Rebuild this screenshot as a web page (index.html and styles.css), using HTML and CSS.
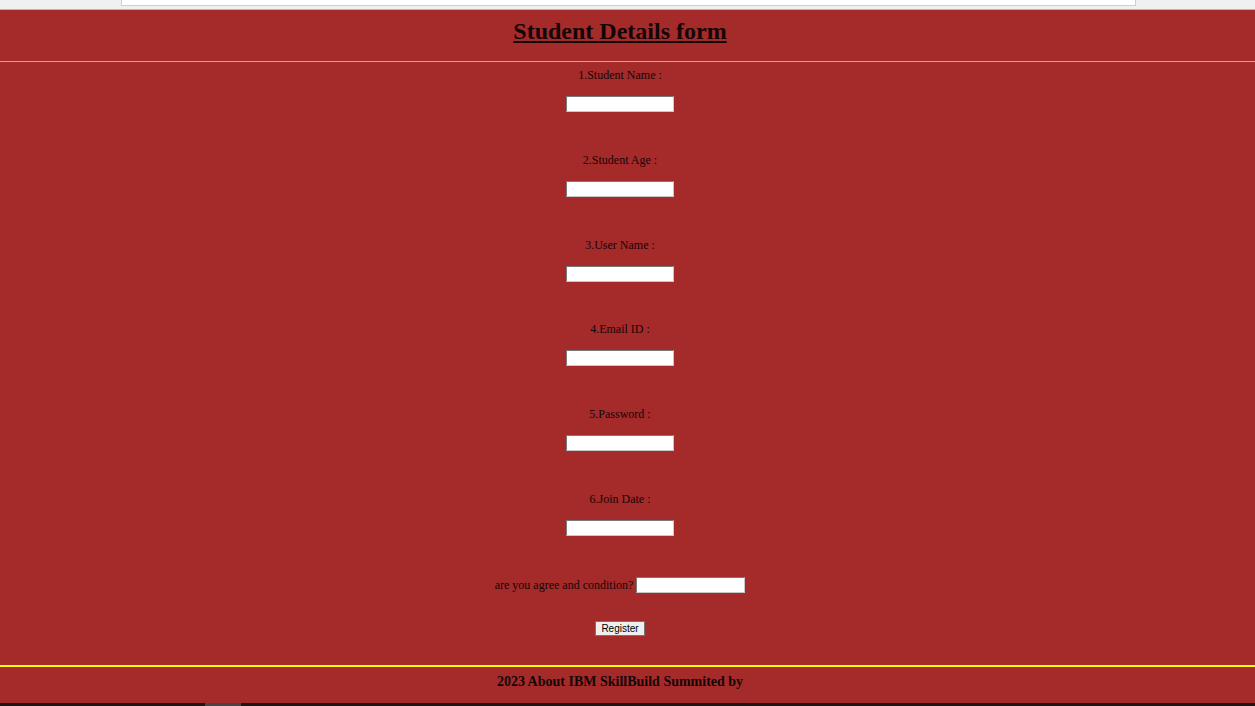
FILE: index.html
```html
<!DOCTYPE html>
<html>
<head>
<meta charset="utf-8">
<link rel="stylesheet" href="styles.css">
</head>
<body>
<div class="chrome"><div class="chrome-box"></div></div>
<div class="page">
  <header class="head"><h2 class="title">Student Details form</h2></header>
  <form class="form">
    <div class="field"><label class="lbl">1.Student Name :</label><input class="inp" type="text"></div>
    <div class="field"><label class="lbl">2.Student Age :</label><input class="inp" type="text"></div>
    <div class="field"><label class="lbl">3.User Name :</label><input class="inp" type="text"></div>
    <div class="field"><label class="lbl">4.Email ID :</label><input class="inp" type="text"></div>
    <div class="field"><label class="lbl">5.Password :</label><input class="inp" type="text"></div>
    <div class="field"><label class="lbl">6.Join Date :</label><input class="inp" type="text"></div>
    <div class="agree"><span class="lbl">are you agree and condition?</span><input class="inp" type="text"></div>
    <div class="btnrow"><button class="btn" type="button">Register</button></div>
  </form>
  <footer class="foot">2023 About IBM SkillBuild Summited by</footer>
</div>
<div class="taskbar"><div class="task-item"></div></div>
</body>
</html>
```
FILE: styles.css
```css
html, body { margin: 0; padding: 0; }
body { width: 1255px; height: 706px; overflow: hidden; background: #a52a2a; font-family: "Liberation Serif", "Times New Roman", serif; color: #140606; }
.chrome { height: 10px; background: #f0f0f0; position: relative; border-bottom: 1px solid #c9b0b0; box-sizing: border-box; }
.chrome-box { position: absolute; left: 121px; width: 1013px; top: 0; height: 5px; background: #fff; border: 1px solid #cfcfcf; border-top: none; }
.page { display: flex; flex-direction: column; height: 693px; }
.head { height: 51px; border-bottom: 1px solid #e8b400; display: flex; justify-content: center; align-items: flex-start; padding-right: 15px; box-sizing: content-box; }
.title { margin: 0; font-size: 24px; font-weight: bold; text-decoration: underline; line-height: 28px; padding-top: 7px; }
.form { flex: 1; display: flex; flex-direction: column; align-items: center; padding-top: 6px; padding-right: 15px; }
.field { display: flex; flex-direction: column; align-items: center; height: 84.8px; }
.lbl { font-size: 12px; line-height: 14px; }
.field .lbl { margin-bottom: 14px; }
.inp { width: 108px; height: 16px; box-sizing: border-box; border: 1px solid #7a7a7a; border-right-color: #c8c8c8; border-bottom-color: #c8c8c8; background: #fff; padding: 0; margin: 0; }
.agree { display: flex; align-items: center; gap: 3px; margin-top: 0; height: 16px; }
.agree .inp { width: 109px; }
.btnrow { margin-top: 25px; }
.btn { width: 50px; height: 15px; padding: 0; font-family: "Liberation Sans", Arial, sans-serif; font-size: 10px; line-height: 13px; color: #000; background: #efefef; border: 1px solid #767676; border-radius: 0; }
.foot { height: 38px; border-top: 2px solid #ffff00; display: flex; justify-content: center; align-items: flex-start; font-weight: bold; font-size: 14px; line-height: 16px; box-sizing: border-box; padding-top: 7px; padding-right: 15px; }
.taskbar { height: 3px; background: #1e1414; position: relative; }
.task-item { position: absolute; left: 205px; width: 36px; top: 0; height: 3px; background: #4a4444; }
```
